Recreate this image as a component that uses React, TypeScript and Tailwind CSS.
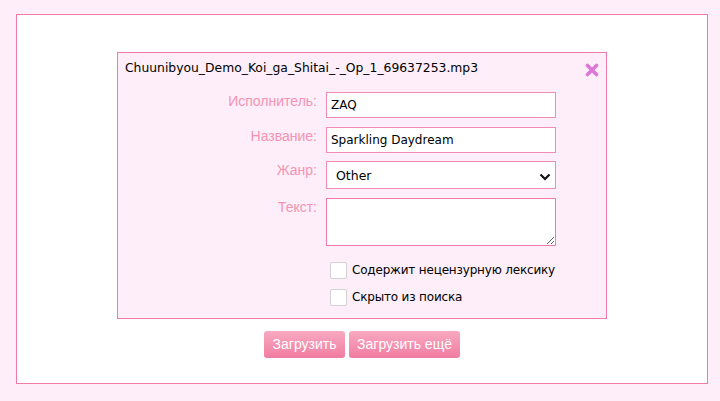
import React from "react";

export default function App() {
  const tahoma = { fontFamily: '"DejaVu Sans", Verdana, sans-serif' };
  return (
    <div className="min-h-[401px] w-[720px] bg-[#fdeef9] pt-[14px] pl-[16px]" style={{ fontFamily: '"Liberation Sans", Arial, sans-serif' }}>
      <div className="w-[692px] h-[370px] border border-[#f27aa8] bg-white pt-[37px]">
        <div className="mx-auto w-[490px] h-[267px] border border-[#f27aa8] bg-[#fdeef9] px-[7px] pt-[5px]">
          <div className="flex items-start justify-between">
            <div className="text-[12.35px] leading-[20px] text-black" style={tahoma}>
              Chuunibyou_Demo_Koi_ga_Shitai_-_Op_1_69637253.mp3
            </div>
            <svg width="14" height="14" viewBox="0 0 14 14" className="mt-[5px] mr-[0px]">
              <path d="M2.5 2.5 L11.5 11.5 M11.5 2.5 L2.5 11.5" stroke="#de78d6" strokeWidth="3.6" strokeLinecap="round" />
            </svg>
          </div>
          <div className="mt-[14px] flex flex-col">
            <div className="flex">
              <div className="w-[192px] text-right text-[14px] leading-[18px] text-[#f593b4]">Исполнитель:</div>
              <input
                defaultValue="ZAQ"
                className="ml-[9px] h-[26px] w-[230px] border border-[#f38cb2] bg-white px-[4px] text-[12px] text-black outline-none"
                style={tahoma}
              />
            </div>
            <div className="mt-[9px] flex">
              <div className="w-[192px] text-right text-[14px] leading-[18px] text-[#f593b4]">Название:</div>
              <input
                defaultValue="Sparkling Daydream"
                className="ml-[9px] h-[26px] w-[230px] border border-[#f38cb2] bg-white px-[4px] text-[12px] text-black outline-none"
                style={tahoma}
              />
            </div>
            <div className="mt-[8px] flex">
              <div className="w-[192px] text-right text-[14px] leading-[18px] text-[#f593b4]">Жанр:</div>
              <div className="relative ml-[9px] h-[28px] w-[230px] border border-[#f38cb2] bg-white">
                <div className="pl-[9px] pt-[1px] text-[12.5px] leading-[26px] text-black" style={tahoma}>Other</div>
                <svg width="12" height="8" viewBox="0 0 12 8" className="absolute right-[4px] top-[11px]">
                  <path d="M1.5 1.5 L6 6 L10.5 1.5" stroke="#111" strokeWidth="2.2" fill="none" />
                </svg>
              </div>
            </div>
            <div className="mt-[9px] flex">
              <div className="w-[192px] text-right text-[14px] leading-[18px] text-[#f593b4]">Текст:</div>
              <textarea
                className="ml-[9px] h-[48px] w-[230px] border border-[#f27aa8] bg-white text-[12px] outline-none"
              />
            </div>
            <div className="ml-[205px] mt-[16px] flex items-center">
              <span className="h-[17px] w-[17px] rounded-[2px] border border-[#d3d3d3] bg-white" />
              <span className="ml-[5px] text-[12px] leading-[17px] tracking-[-0.18px] text-black" style={tahoma}>Содержит нецензурную лексику</span>
            </div>
            <div className="ml-[205px] mt-[10px] flex items-center">
              <span className="h-[17px] w-[17px] rounded-[2px] border border-[#d3d3d3] bg-white" />
              <span className="ml-[5px] text-[12px] leading-[17px] tracking-[-0.18px] text-black" style={tahoma}>Скрыто из поиска</span>
            </div>
          </div>
        </div>
        <div className="mt-[12px] flex justify-center gap-[4px]">
          <button className="h-[27px] w-[81px] rounded-[3px] bg-gradient-to-b from-[#f8a9c1] to-[#f07ca2] text-[14px] text-white">Загрузить</button>
          <button className="h-[27px] w-[111px] rounded-[3px] bg-gradient-to-b from-[#f8a9c1] to-[#f07ca2] text-[14px] text-white">Загрузить ещё</button>
        </div>
      </div>
    </div>
  );
}
